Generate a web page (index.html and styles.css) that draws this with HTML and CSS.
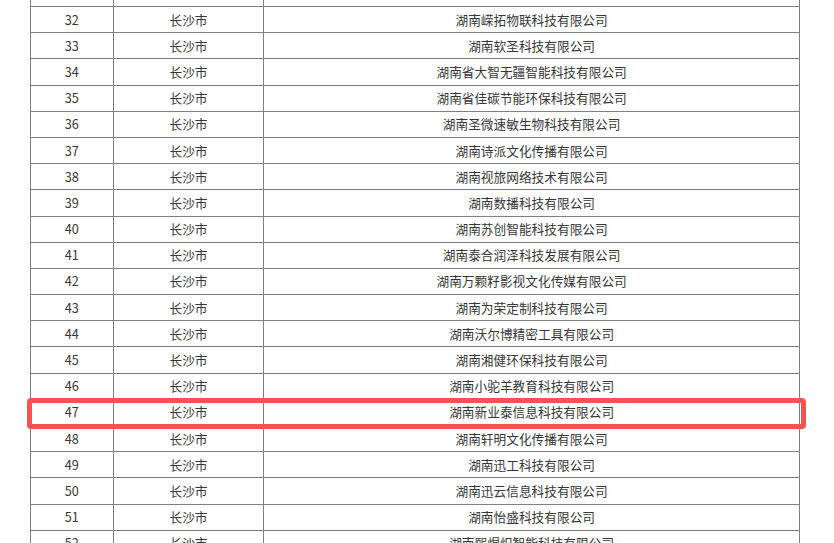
FILE: index.html
```html
<!DOCTYPE html>
<html lang="zh-CN">
<head>
<meta charset="utf-8">
<title>名单</title>
<link rel="stylesheet" href="styles.css">
</head>
<body>
<div class="page">
  <table class="list">
    <colgroup>
      <col class="c-no">
      <col class="c-city">
      <col class="c-name">
    </colgroup>
    <tbody>
      <tr class="cut"><td></td><td></td><td></td></tr>
      <tr><td>32</td><td>长沙市</td><td>湖南嵘拓物联科技有限公司</td></tr>
      <tr><td>33</td><td>长沙市</td><td>湖南软圣科技有限公司</td></tr>
      <tr><td>34</td><td>长沙市</td><td>湖南省大智无疆智能科技有限公司</td></tr>
      <tr><td>35</td><td>长沙市</td><td>湖南省佳碳节能环保科技有限公司</td></tr>
      <tr><td>36</td><td>长沙市</td><td>湖南圣微速敏生物科技有限公司</td></tr>
      <tr><td>37</td><td>长沙市</td><td>湖南诗派文化传播有限公司</td></tr>
      <tr><td>38</td><td>长沙市</td><td>湖南视旅网络技术有限公司</td></tr>
      <tr><td>39</td><td>长沙市</td><td>湖南数播科技有限公司</td></tr>
      <tr><td>40</td><td>长沙市</td><td>湖南苏创智能科技有限公司</td></tr>
      <tr><td>41</td><td>长沙市</td><td>湖南泰合润泽科技发展有限公司</td></tr>
      <tr><td>42</td><td>长沙市</td><td>湖南万颗籽影视文化传媒有限公司</td></tr>
      <tr><td>43</td><td>长沙市</td><td>湖南为荣定制科技有限公司</td></tr>
      <tr><td>44</td><td>长沙市</td><td>湖南沃尔博精密工具有限公司</td></tr>
      <tr><td>45</td><td>长沙市</td><td>湖南湘健环保科技有限公司</td></tr>
      <tr><td>46</td><td>长沙市</td><td>湖南小驼羊教育科技有限公司</td></tr>
      <tr><td>47</td><td>长沙市</td><td>湖南新业泰信息科技有限公司</td></tr>
      <tr><td>48</td><td>长沙市</td><td>湖南轩明文化传播有限公司</td></tr>
      <tr><td>49</td><td>长沙市</td><td>湖南迅工科技有限公司</td></tr>
      <tr><td>50</td><td>长沙市</td><td>湖南迅云信息科技有限公司</td></tr>
      <tr><td>51</td><td>长沙市</td><td>湖南怡盛科技有限公司</td></tr>
      <tr><td>52</td><td>长沙市</td><td>湖南熙煜炽智能科技有限公司</td></tr>
    </tbody>
  </table>
  <div class="highlight"></div>
</div>
</body>
</html>
```

FILE: styles.css
```css
html, body {
  margin: 0;
  padding: 0;
  background: #ffffff;
  overflow: hidden;
}

.page {
  position: relative;
  width: 834px;
  height: 543px;
  overflow: hidden;
}

.list {
  border-collapse: collapse;
  table-layout: fixed;
  width: 769px;
  margin-left: 30px;
  margin-top: -20.2px;
  font-family: "Noto Sans CJK SC", "Noto Sans", sans-serif;
  font-size: 12.7px;
  color: #363636;
}

.c-no { width: 82.7px; }
.c-city { width: 150.6px; }
.c-name { width: 535.7px; }

.list td {
  border: 1px solid #808080;
  height: 25.2px;
  padding: 0;
  text-align: center;
  vertical-align: middle;
  line-height: 16px;
  white-space: nowrap;
}

.highlight {
  position: absolute;
  left: 27px;
  top: 397.5px;
  width: 779px;
  height: 31px;
  box-sizing: border-box;
  border: 5px solid #f75252;
  border-radius: 4px;
}
```
